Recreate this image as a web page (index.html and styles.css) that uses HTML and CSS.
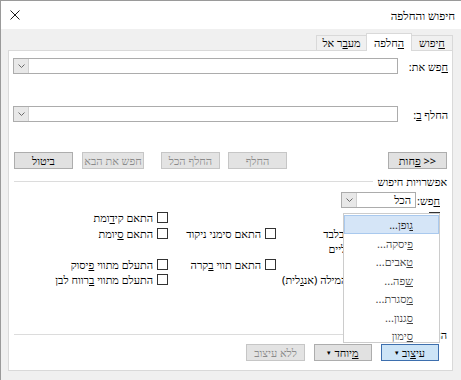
FILE: index.html
```html
<!DOCTYPE html>
<html lang="he" dir="rtl">

<head>
    <meta charset="UTF-8">
    <meta name="viewport" content="width=device-width, initial-scale=1.0">
    <title>חיפוש והחלפה</title>
    <link rel="stylesheet" href="styles.css">
</head>

<body>
    <div class="dialog">
        <!-- Title bar -->
        <div class="title-bar">
            <span class="title-text">חיפוש והחלפה</span>
            <svg class="close-icon" width="10" height="10" viewBox="0 0 10 10">
                <path d="M0.5 0.5L9.5 9.5M9.5 0.5L0.5 9.5" stroke="#1a1a1a" stroke-width="1" fill="none" />
            </svg>
        </div>

        <!-- Tabs -->
        <div class="tabs">
            <div class="tab tab-find"><u>ח</u>יפוש</div>
            <div class="tab tab-active"><u>ה</u>חלפה</div>
            <div class="tab tab-goto">מע<u>ב</u>ר אל</div>
        </div>

        <div class="panel">
            <div class="field-row">
                <div class="field-label"><u>ח</u>פש את:</div>
                <div class="combo combo-wide">
                    <span class="combo-text"></span>
                    <span class="combo-arrow">
                        <svg width="7" height="4" viewBox="0 0 7 4"><path d="M0.5 0.5L3.5 3.5L6.5 0.5" stroke="#6a6a6a" fill="none" /></svg>
                    </span>
                </div>
            </div>

            <div class="field-row field-row-replace">
                <div class="field-label">החלף <u>ב</u>:</div>
                <div class="combo combo-wide">
                    <span class="combo-text"></span>
                    <span class="combo-arrow">
                        <svg width="7" height="4" viewBox="0 0 7 4"><path d="M0.5 0.5L3.5 3.5L6.5 0.5" stroke="#6a6a6a" fill="none" /></svg>
                    </span>
                </div>
            </div>

            <!-- Main buttons -->
            <div class="button-row">
                <button class="btn btn-less">&lt;&lt; <u>פ</u>חות</button>
                <div class="button-group">
                    <button class="btn btn-disabled">החלף</button>
                    <button class="btn btn-disabled btn-replace-all">החלף הכל</button>
                    <button class="btn btn-disabled btn-find-next">חפש את הבא</button>
                    <button class="btn btn-cancel">ביטול</button>
                </div>
            </div>

            <!-- Search options -->
            <div class="section-title">
                <span>אפשרויות חיפוש</span>
                <span class="section-line"></span>
            </div>

            <div class="search-row">
                <span class="search-label"><u>ח</u>פש:</span>
                <div class="combo combo-search">
                    <span class="combo-text">הכל</span>
                    <span class="combo-arrow">
                        <svg width="7" height="4" viewBox="0 0 7 4"><path d="M0.5 0.5L3.5 3.5L6.5 0.5" stroke="#6a6a6a" fill="none" /></svg>
                    </span>
                </div>
            </div>

            <div class="options-grid">
                <label class="option"><span class="check"></span><span>התאם רישיות</span></label>
                <span></span>
                <label class="option"><span class="check"></span><span>התאם קי<u>ד</u>ומת</span></label>

                <label class="option"><span class="check"></span><span>מצא מילים שלמות בלבד</span></label>
                <label class="option"><span class="check"></span><span>התאם סימני ניקוד</span></label>
                <label class="option"><span class="check"></span><span>התאם <u>ס</u>יומת</span></label>

                <label class="option"><span class="check"></span><span>השתמש בתווים כלליים</span></label>
                <span></span>
                <span></span>

                <label class="option"><span class="check"></span><span>נשמע כמו (אנגלית)</span></label>
                <label class="option"><span class="check"></span><span>התאם תווי <u>ב</u>קרה</span></label>
                <label class="option"><span class="check"></span><span>התעלם מתווי <u>פ</u>יסוק</span></label>

                <label class="option"><span class="check"></span><span>מצא את כל צורות המילה (אנ<u>ג</u>לית)</span></label>
                <span></span>
                <label class="option"><span class="check"></span><span>התעלם מתווי <u>ב</u>רווח לבן</span></label>
            </div>

            <!-- Replace section -->
            <div class="replace-section">
                <div class="section-title section-title-replace">
                    <span>החלף</span>
                    <span class="section-line"></span>
                </div>
                <div class="format-row">
                    <button class="btn btn-format"><span>עי<u>צ</u>וב</span><span class="caret">&#9662;</span></button>
                    <button class="btn btn-special"><span><u>מ</u>יוחד</span><span class="caret">&#9662;</span></button>
                    <button class="btn btn-disabled">ללא עיצוב</button>
                </div>
            </div>

            <!-- Format dropdown menu (open) -->
            <ul class="format-menu">
                <li class="menu-item menu-item-hover"><u>ג</u>ופן...</li>
                <li class="menu-item"><u>פ</u>יסקה...</li>
                <li class="menu-item"><u>ט</u>אבים...</li>
                <li class="menu-item"><u>ש</u>פה...</li>
                <li class="menu-item"><u>מ</u>סגרת...</li>
                <li class="menu-item"><u>ס</u>גנון...</li>
                <li class="menu-item"><u>ס</u>ימון</li>
            </ul>
        </div>
    </div>
</body>

</html>
```

FILE: styles.css
```css
* {
    margin: 0;
    padding: 0;
    box-sizing: border-box;
}

/* Noto Sans draws the Latin marks, Liberation Serif the Hebrew letters */
body {
    font-family: "Noto Sans", "Liberation Serif", serif;
    font-size: 11px;
    color: #000;
    background-color: #f0f0f0;
}

u {
    text-decoration: underline;
    text-underline-offset: 1px;
}

.dialog {
    width: 461px;
    height: 380px;
    background-color: #f0f0f0;
    border-top: 1px solid #9a9a9a;
    border-left: 1px solid #9a9a9a;
    display: flex;
    flex-direction: column;
}

/* Title bar */
.title-bar {
    height: 28px;
    background-color: #fff;
    display: flex;
    justify-content: space-between;
    align-items: center;
    padding: 0 6px 0 9px;
}

.title-text {
    font-size: 11.5px;
}

.close-icon {
    display: block;
}

/* Tabs */
.tabs {
    display: flex;
    align-items: flex-end;
    height: 17px;
    margin-top: 4px;
    padding-right: 8px;
    position: relative;
    z-index: 1;
}

.tab {
    height: 15px;
    border: 1px solid #d9d9d9;
    border-bottom: none;
    background-color: #f0f0f0;
    line-height: 13px;
    text-align: center;
}

.tab-find {
    width: 41px;
    border-left: none;
}

.tab-goto {
    width: 50px;
    border-right: none;
}

.tab-active {
    width: 46px;
    height: 18px;
    margin-bottom: -1px;
    background-color: #fff;
    line-height: 17px;
}

/* Tab panel */
.panel {
    position: relative;
    height: 321px;
    margin: 0 8px 0 7px;
    background-color: #fff;
    border: 1px solid #d9d9d9;
    padding: 7px 4px 9px 4px;
    display: flex;
    flex-direction: column;
}

.field-row {
    display: flex;
    align-items: center;
    height: 16px;
}

.field-row-replace {
    margin-top: 32px;
}

.field-label {
    width: 50px;
    white-space: nowrap;
}

.combo {
    display: flex;
    height: 16px;
    border: 1px solid #acacac;
    background-color: #fff;
}

.combo-wide {
    flex: 1;
}

.combo-text {
    flex: 1;
    line-height: 14px;
    padding-right: 4px;
}

.combo-arrow {
    width: 15px;
    display: flex;
    align-items: center;
    justify-content: center;
    background-color: #e8e8e8;
    border-right: 1px solid #d0d0d0;
}

.combo-arrow svg {
    display: block;
}

/* Buttons */
.button-row {
    display: flex;
    justify-content: space-between;
    margin-top: 30px;
    padding: 0 1px;
}

.button-group {
    display: flex;
}

.btn {
    direction: rtl;
    font-family: inherit;
    font-size: 11px;
    height: 17px;
    width: 59px;
    border: 1px solid #adadad;
    background-color: #e1e1e1;
    color: #000;
    line-height: 15px;
    white-space: nowrap;
}

.btn-disabled {
    color: #8a8a8a;
    border-color: #c6c6c6;
    background-color: #e3e3e3;
}

.btn-replace-all {
    margin-right: 8px;
}

.btn-find-next {
    width: 62px;
    margin-right: 17px;
}

.btn-cancel {
    margin-right: 9px;
}

/* Section titles with line */
.section-title {
    display: flex;
    align-items: center;
    height: 14px;
    margin-top: 5px;
    padding: 0 1px;
    white-space: nowrap;
}

.section-line {
    flex: 1;
    height: 1px;
    background-color: #dcdcdc;
    margin-right: 5px;
}

.search-row {
    display: flex;
    align-items: center;
    margin-top: 4px;
    padding-right: 8px;
}

.search-label {
    width: 24px;
    white-space: nowrap;
}

.combo-search {
    width: 75px;
}

/* Options grid */
.options-grid {
    display: grid;
    grid-template-columns: 164px 108px 1fr;
    grid-auto-rows: 15.5px;
    align-items: center;
    margin-top: 2px;
    padding-right: 8px;
}

.option {
    display: flex;
    align-items: center;
    gap: 4px;
    white-space: nowrap;
}

.check {
    width: 11px;
    height: 11px;
    border: 1px solid #333;
    background-color: #fff;
    flex-shrink: 0;
}

/* Replace section */
.replace-section {
    margin-top: auto;
}

.section-title-replace {
    margin-top: 0;
}

.format-row {
    display: flex;
    gap: 9px;
    margin-top: 3px;
    padding-right: 9px;
}

.btn-format,
.btn-special {
    display: flex;
    align-items: center;
    justify-content: center;
    gap: 3px;
    width: 58px;
}

.btn-format {
    background-color: #cce4f7;
    border-color: #3d6fae;
}

.caret {
    font-size: 7px;
}

/* Dropdown menu */
.format-menu {
    list-style: none;
    position: absolute;
    left: 334px;
    top: 162px;
    width: 97px;
    height: 130px;
    background-color: #fff;
    border: 1px solid #cccccc;
    padding: 1px 0 0 0;
    z-index: 2;
    overflow: hidden;
}

.menu-item {
    height: 18.5px;
    line-height: 17px;
    padding-right: 25px;
    color: #444;
    border: 1px solid transparent;
}

.menu-item-hover {
    background-color: #d5e5f7;
    border-color: #a9c9ee;
    color: #222;
}
```
